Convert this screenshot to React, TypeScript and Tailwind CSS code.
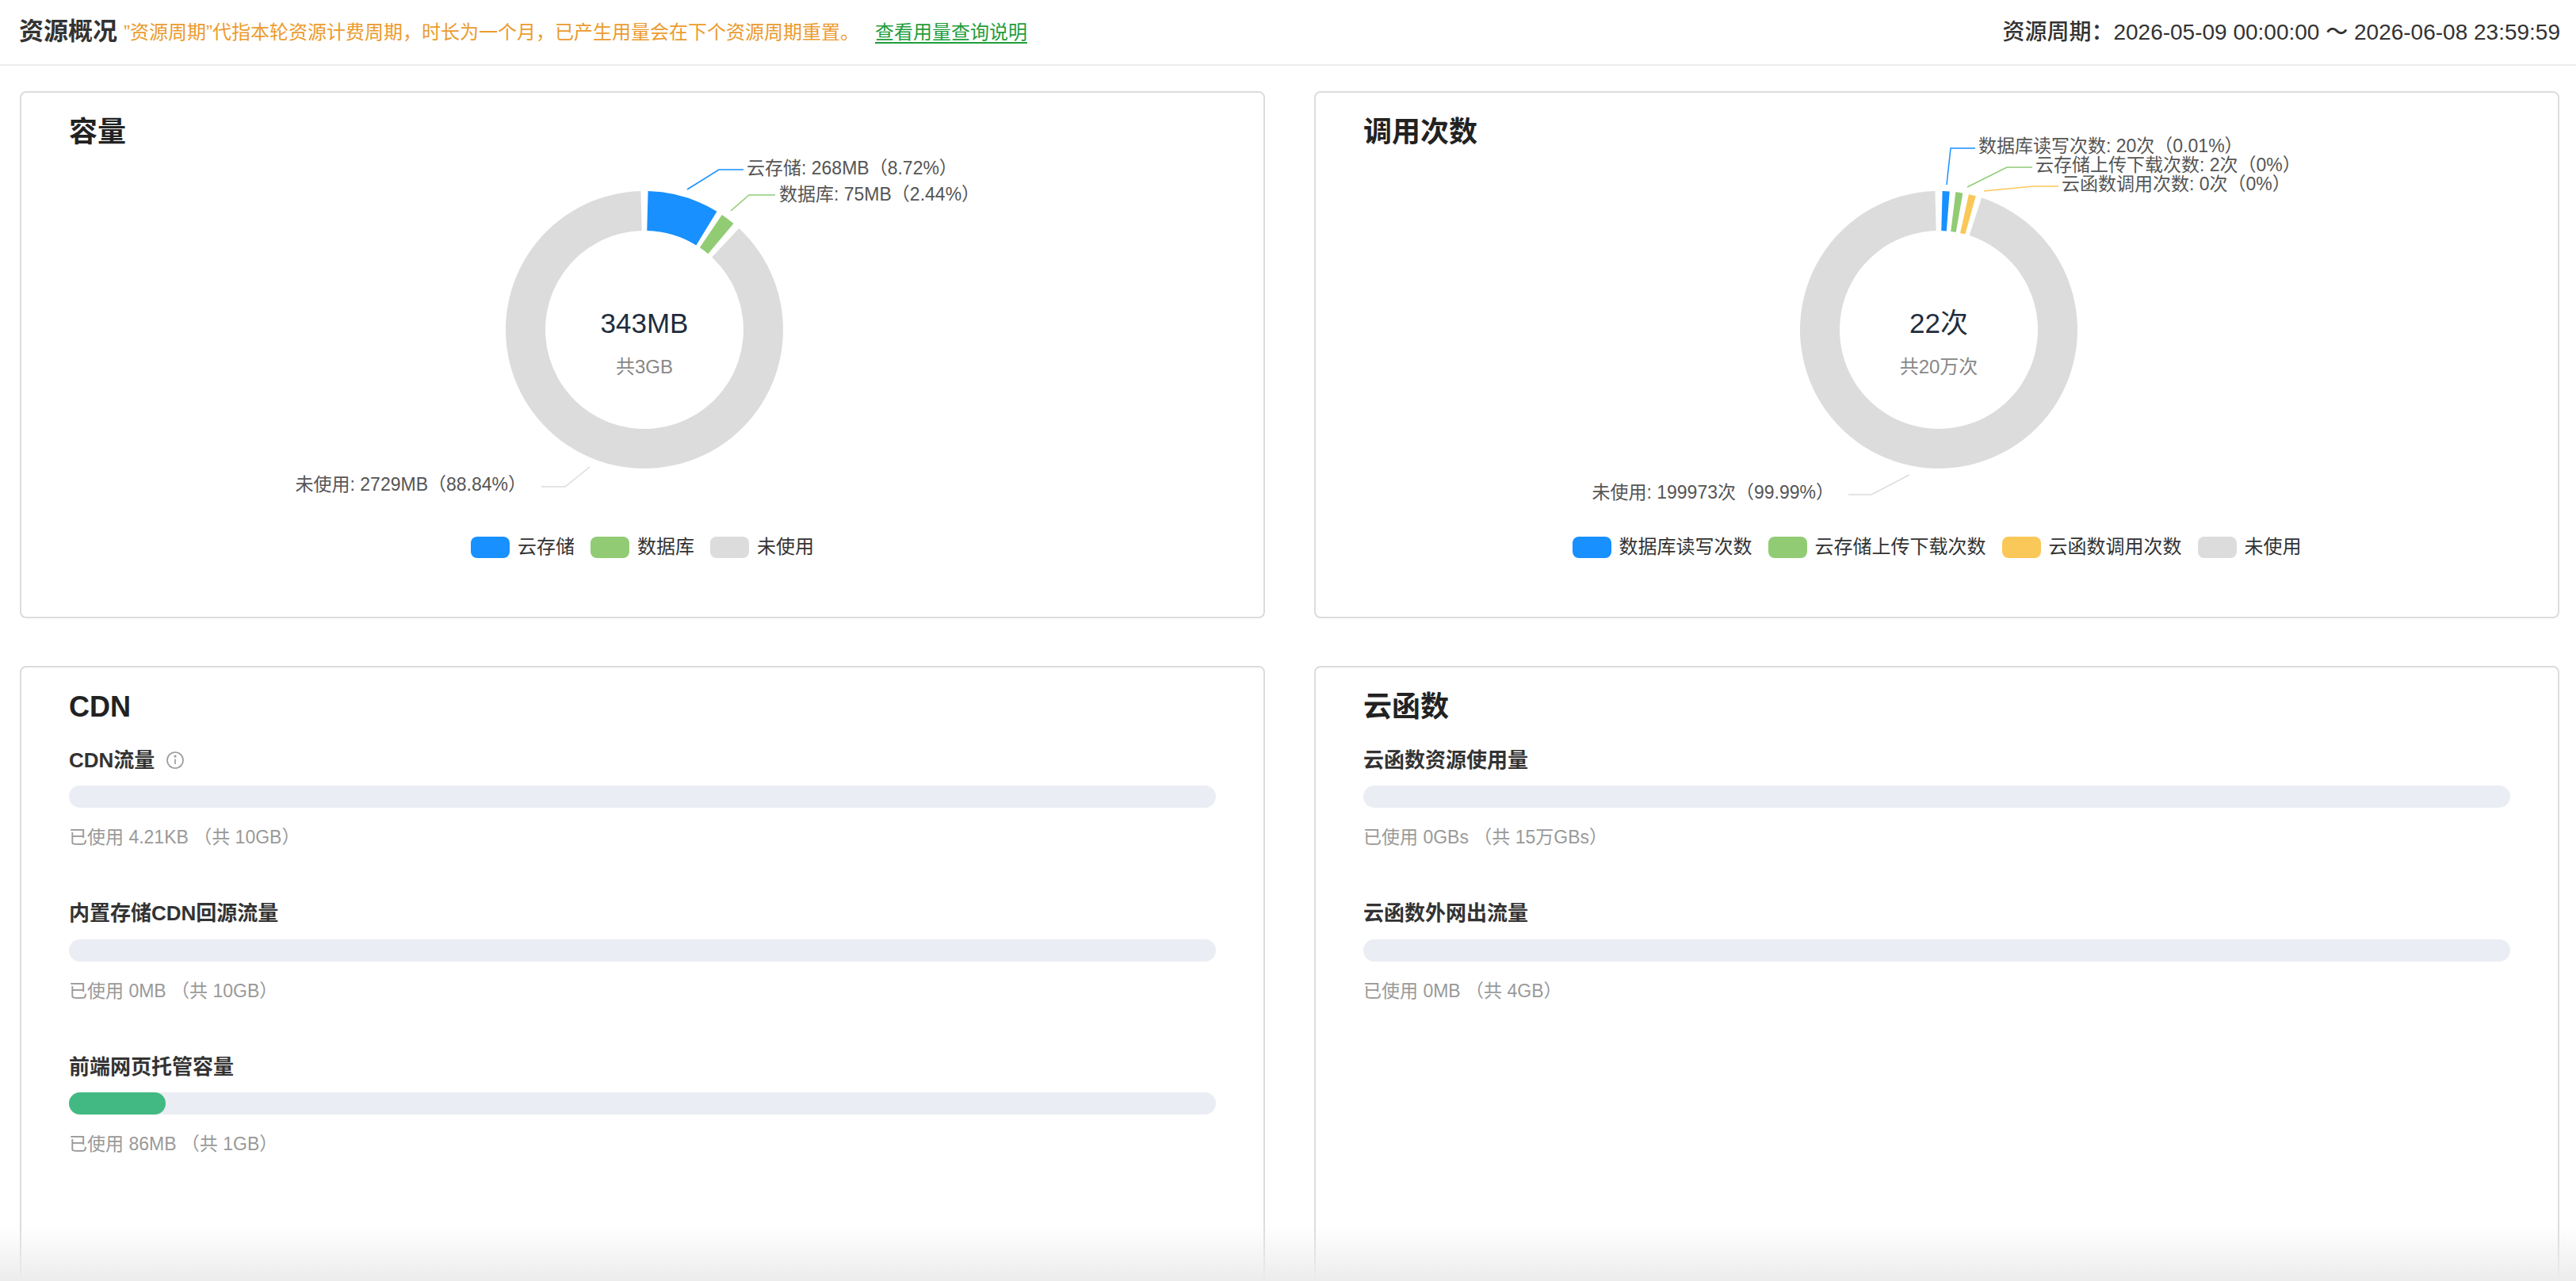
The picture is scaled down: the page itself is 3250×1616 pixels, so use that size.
import React from 'react';

const FONT = '"Liberation Sans", "Noto Sans CJK SC", sans-serif';

// angle in degrees clockwise from 12 o'clock
function pt(cx: number, cy: number, r: number, a: number) {
  const rad = ((a - 90) * Math.PI) / 180;
  return [cx + r * Math.cos(rad), cy + r * Math.sin(rad)];
}

function arc(cx: number, cy: number, r0: number, r1: number, a0: number, a1: number) {
  const large = a1 - a0 > 180 ? 1 : 0;
  const [x0, y0] = pt(cx, cy, r1, a0);
  const [x1, y1] = pt(cx, cy, r1, a1);
  const [x2, y2] = pt(cx, cy, r0, a1);
  const [x3, y3] = pt(cx, cy, r0, a0);
  return `M${x0} ${y0} A${r1} ${r1} 0 ${large} 1 ${x1} ${y1} L${x2} ${y2} A${r0} ${r0} 0 ${large} 0 ${x3} ${y3} Z`;
}

interface Seg { color: string; a0: number; a1: number }
interface Label { text: string; x: number; y: number; color: string; line: string; anchor?: 'start' | 'end' }

function Donut({ ox, cx, segs, labels, main, sub }: { ox: number; cx: number; segs: Seg[]; labels: Label[]; main: string; sub: string }) {
  const cy = 415;
  return (
    <svg width="1567" height="478" className="block overflow-visible" style={{ fontFamily: FONT }}>
      <g transform={`translate(${-ox},-196)`}>
        {segs.map((s, i) => (
          <path key={i} d={arc(cx, cy, 125, 175, s.a0, s.a1)} fill={s.color} />
        ))}
        {labels.map((l, i) => (
          <g key={i}>
            <polyline points={l.line} fill="none" stroke={l.color} strokeWidth="1.5" />
            <text x={l.x} y={l.y} fontSize="23" fill="#555" dominantBaseline="middle" textAnchor={l.anchor || 'start'}>{l.text}</text>
          </g>
        ))}
        <text x={cx} y={cy - 5} fontSize="35" fill="#1f2d3d" textAnchor="middle" dominantBaseline="middle">{main}</text>
        <text x={cx} y={cy + 49} fontSize="24" fill="#888" textAnchor="middle" dominantBaseline="middle">{sub}</text>
      </g>
    </svg>
  );
}

function Legend({ items }: { items: [string, string][] }) {
  return (
    <div className="flex h-[30px] items-center justify-center gap-[20px]">
      {items.map(([c, t]) => (
        <div key={t} className="flex items-center gap-[10px]">
          <span className="h-[27px] w-[49px] rounded-[8px]" style={{ background: c }} />
          <span className="text-[24px] text-[#333]">{t}</span>
        </div>
      ))}
    </div>
  );
}

function Bar({ title, pct, caption, info }: { title: string; pct: number; caption: string; info?: boolean }) {
  return (
    <div className="mb-[62px]">
      <div className="flex h-[34px] items-center gap-[14px] text-[26px] font-semibold text-[#333]">
        {title}
        {info && (
          <svg width="24" height="24" viewBox="0 0 24 24" fill="none" stroke="#999" strokeWidth="1.6">
            <circle cx="12" cy="12" r="10" />
            <line x1="12" y1="10.5" x2="12" y2="17" />
            <circle cx="12" cy="7" r="0.8" fill="#999" />
          </svg>
        )}
      </div>
      <div className="mt-[15px] h-[28px] w-full rounded-full bg-[#ebedf4]">
        {pct > 0 && <div className="h-full rounded-full bg-[#42b983]" style={{ width: `${pct}%` }} />}
      </div>
      <div className="mt-[20px] text-[23px] text-[#999]">{caption}</div>
    </div>
  );
}

function Card({ children, title }: { children: React.ReactNode; title: string }) {
  return (
    <div className="relative w-[1571px] shrink-0 rounded-[8px] border-2 border-[#dcdcdc] bg-white">
      <div className="h-[80px] px-[60px] pt-[32px] text-[36px] leading-[36px] font-semibold text-[#222]">{title}</div>
      {children}
    </div>
  );
}

export default function App() {
  return (
    <div className="relative h-[1616px] w-[3250px] overflow-hidden bg-white" style={{ fontFamily: FONT }}>
      <div className="flex h-[83px] items-center justify-between border-b-2 border-[#ececec] pl-[24px] pr-[20px]">
        <div className="flex items-center gap-[8px]">
          <span className="text-[31px] font-bold text-[#333]">资源概况</span>
          <span className="text-[24px] text-[#eb9b2e]">”资源周期”代指本轮资源计费周期，时长为一个月，已产生用量会在下个资源周期重置。</span>
          <span className="ml-[12px] text-[24px] text-[#1f9d3c] underline underline-offset-4">查看用量查询说明</span>
        </div>
        <span className="text-[28px] font-medium text-[#333]">资源周期：2026-05-09 00:00:00 ～ 2026-06-08 23:59:59</span>
      </div>

      <div className="flex gap-[62px] px-[25px] pt-[32px]">
        <Card title="容量">
          <Donut
            ox={25}
            cx={811}
            main="343MB"
            sub="共3GB"
            segs={[
              { color: '#1890ff', a0: 1.5, a1: 31.5 },
              { color: '#91cc75', a0: 34, a1: 40 },
              { color: '#dcdcdc', a0: 43, a1: 358.5 },
            ]}
            labels={[
              { text: '云存储: 268MB（8.72%）', x: 940, y: 213, color: '#1890ff', line: '865,238 905,213 936,213' },
              { text: '数据库: 75MB（2.44%）', x: 981, y: 246, color: '#91cc75', line: '920,265 943,245 976,245' },
              { text: '未使用: 2729MB（88.84%）', x: 662, y: 612, color: '#dcdcdc', line: '742,588 711,613 681,613', anchor: 'end' },
            ]}
          />
          <Legend items={[['#1890ff', '云存储'], ['#91cc75', '数据库'], ['#dcdcdc', '未使用']]} />
          <div className="h-[73px]" />
        </Card>
        <Card title="调用次数">
          <Donut
            ox={1658}
            cx={2444}
            main="22次"
            sub="共20万次"
            segs={[
              { color: '#1890ff', a0: 1.5, a1: 4.5 },
              { color: '#91cc75', a0: 7, a1: 10 },
              { color: '#fac858', a0: 12.5, a1: 15.5 },
              { color: '#dcdcdc', a0: 18, a1: 358.5 },
            ]}
            labels={[
              { text: '数据库读写次数: 20次（0.01%）', x: 2494, y: 185, color: '#1890ff', line: '2454,232 2459,186 2490,186' },
              { text: '云存储上传下载次数: 2次（0%）', x: 2566, y: 209, color: '#91cc75', line: '2480,235 2530,210 2562,210' },
              { text: '云函数调用次数: 0次（0%）', x: 2599, y: 233, color: '#fac858', line: '2501,240 2563,234 2595,234' },
              { text: '未使用: 199973次（99.99%）', x: 2312, y: 622, color: '#dcdcdc', line: '2407,598 2359,623 2330,623', anchor: 'end' },
            ]}
          />
          <Legend items={[['#1890ff', '数据库读写次数'], ['#91cc75', '云存储上传下载次数'], ['#fac858', '云函数调用次数'], ['#dcdcdc', '未使用']]} />
          <div className="h-[73px]" />
        </Card>
      </div>

      <div className="flex gap-[62px] px-[25px] pt-[60px]">
        <Card title="CDN">
          <div className="px-[60px] pt-[20px] pb-[200px]">
            <Bar title="CDN流量" info pct={0} caption="已使用 4.21KB （共 10GB）" />
            <Bar title="内置存储CDN回源流量" pct={0} caption="已使用 0MB （共 10GB）" />
            <Bar title="前端网页托管容量" pct={8.4} caption="已使用 86MB （共 1GB）" />
          </div>
        </Card>
        <Card title="云函数">
          <div className="px-[60px] pt-[20px] pb-[200px]">
            <Bar title="云函数资源使用量" pct={0} caption="已使用 0GBs （共 15万GBs）" />
            <Bar title="云函数外网出流量" pct={0} caption="已使用 0MB （共 4GB）" />
          </div>
        </Card>
      </div>
      <div className="pointer-events-none absolute bottom-0 left-0 h-[70px] w-full bg-gradient-to-b from-transparent to-[#ececec]" />
    </div>
  );
}
